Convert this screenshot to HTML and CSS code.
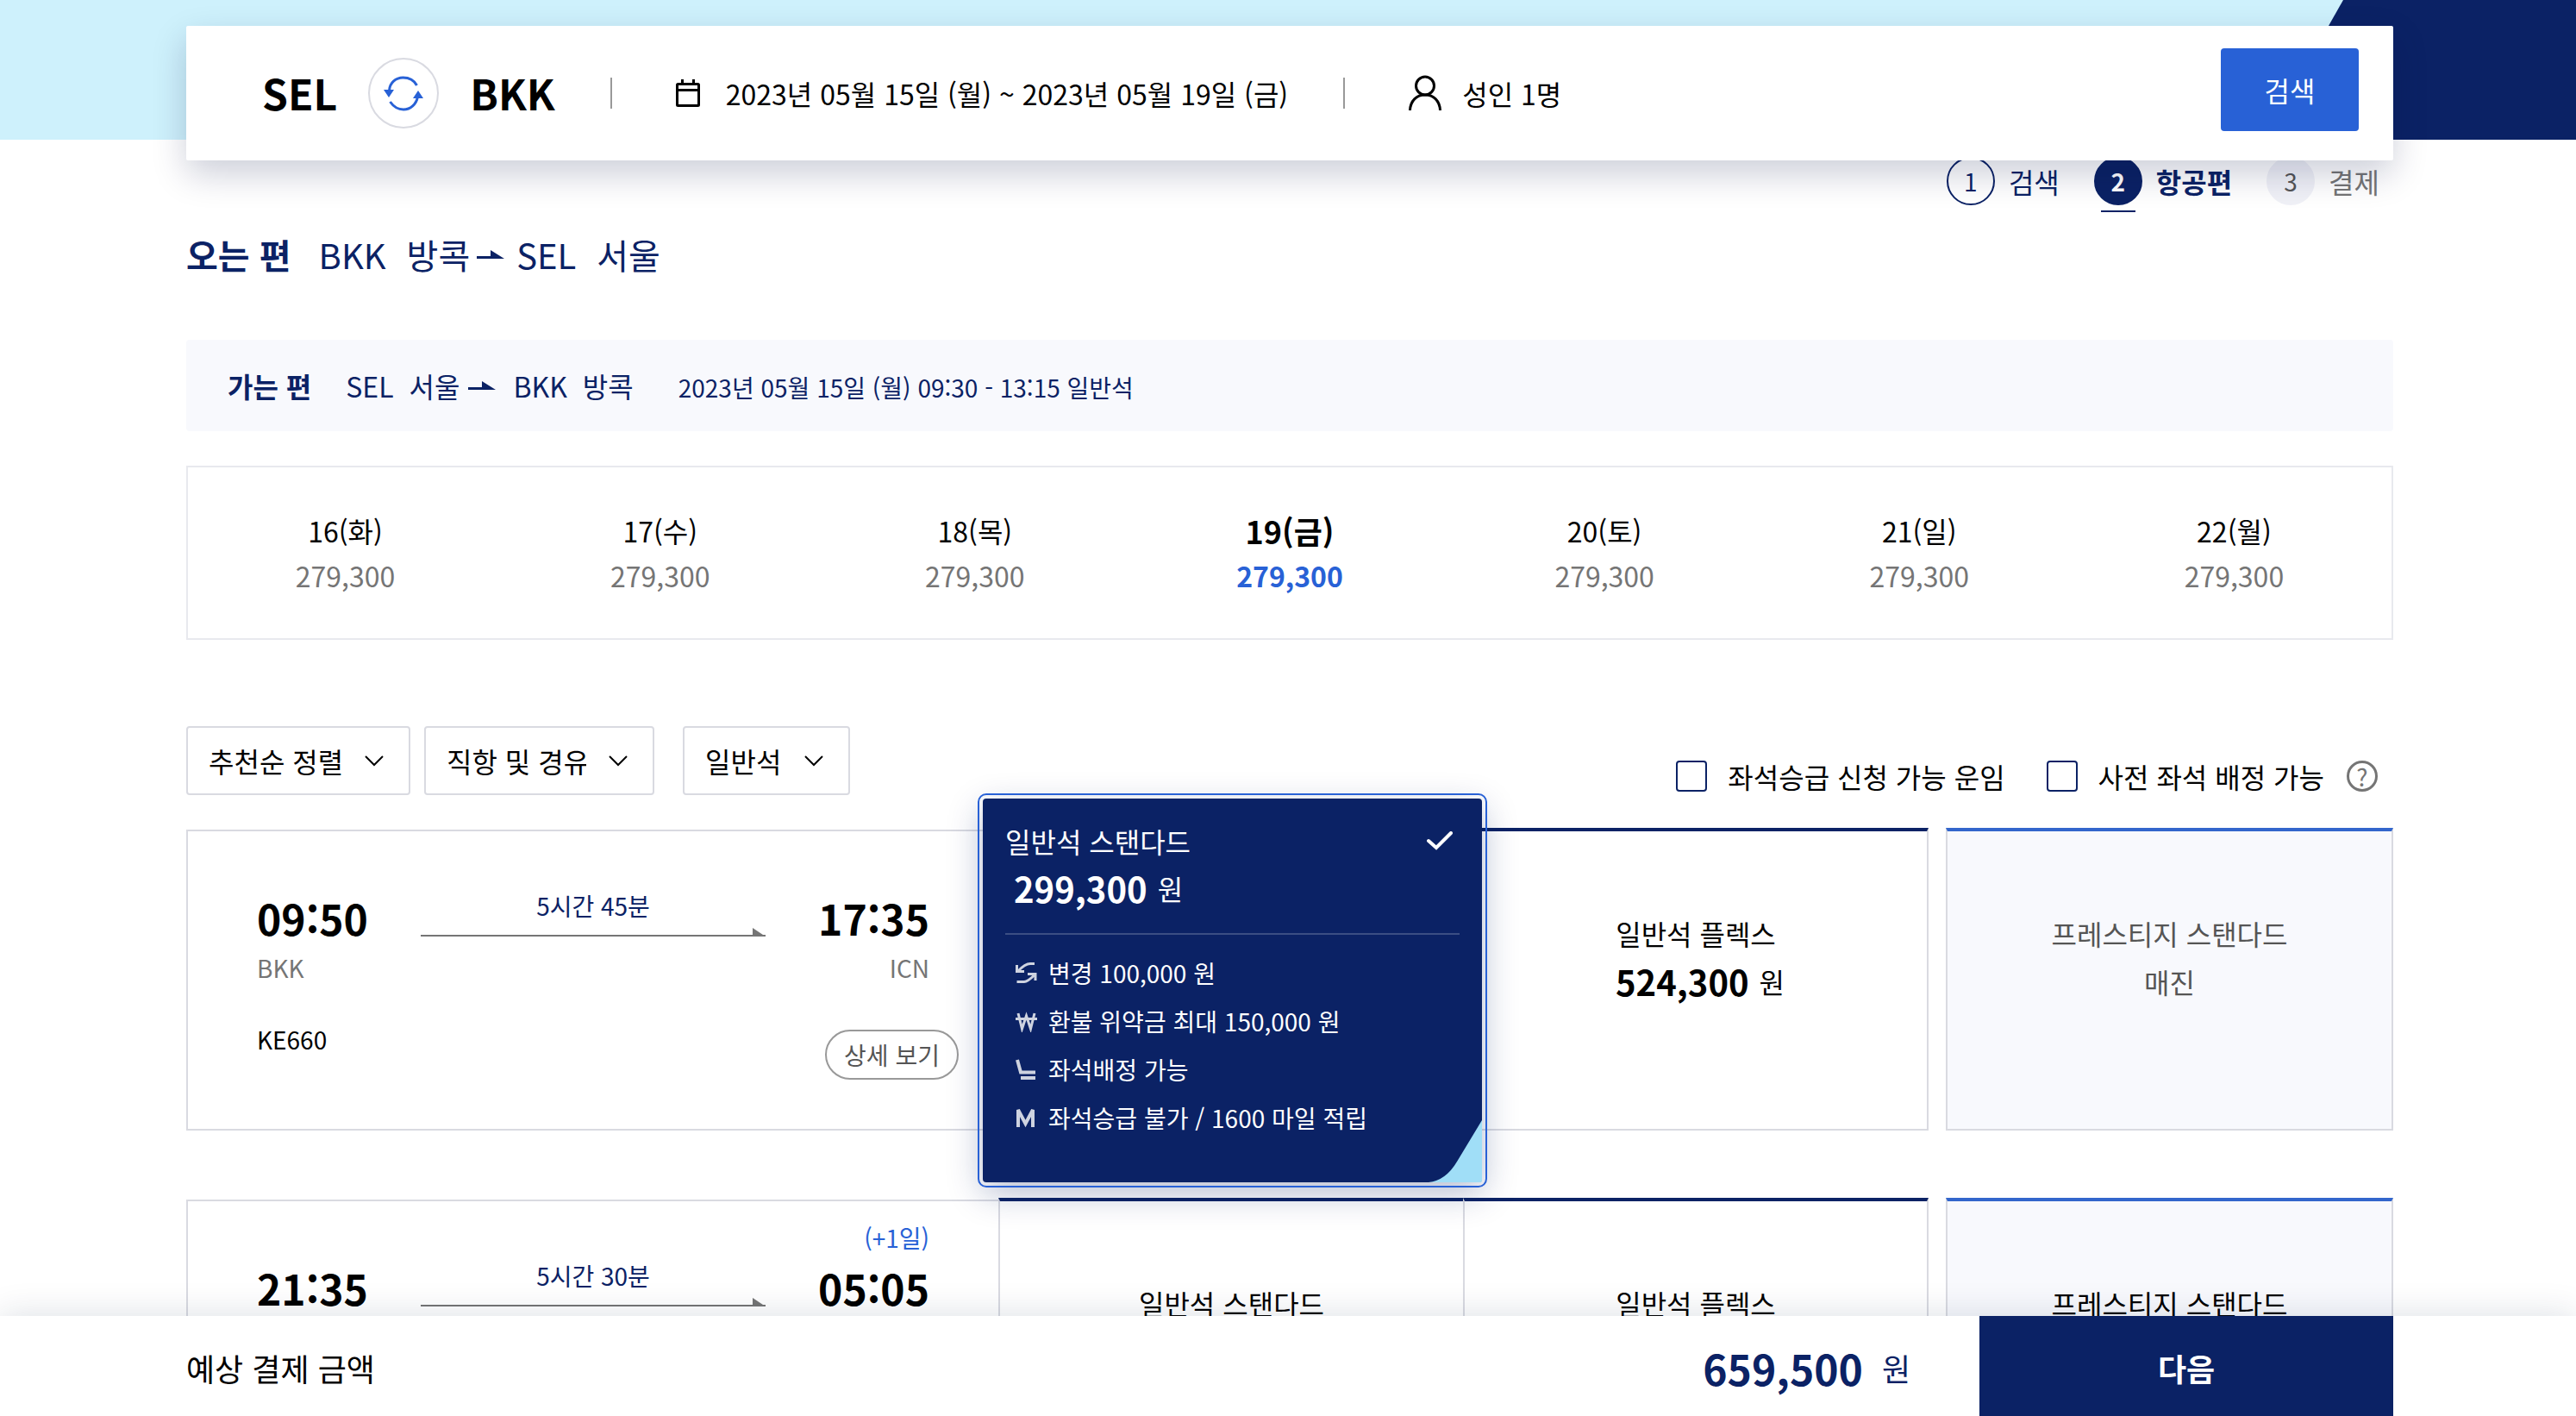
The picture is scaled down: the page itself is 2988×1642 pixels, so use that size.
FILE: index.html
```html
<!DOCTYPE html>
<html lang="ko">
<head>
  <meta charset="UTF-8">
  <title>항공편 선택</title>
  <link rel="stylesheet" href="styles.css">
</head>
<body>
  <header class="hero">
    <div class="hero-navy"></div>
  </header>

  <main class="container">
    <section class="search-bar">
      <strong class="city">SEL</strong>
      <button class="swap" type="button" aria-label="출발지 도착지 변경">
        <svg width="46" height="43" viewBox="0 0 46 43" fill="none" stroke="#2861d6" stroke-width="3">
          <path d="M6.500 18C7 9 14 3 22.500 3c7 0 13 3.500 16 9"/>
          <path d="M39.500 25C38 34 31 40 23 40c-7 0-12-4-15.500-9"/>
          <path d="M0 17h12l-6 9zM34 27h12l-6-9z" fill="#2861d6" stroke="none"/>
        </svg>
      </button>
      <strong class="city">BKK</strong>
      <span class="divider"></span>
      <span class="search-item">
        <svg width="28" height="32" viewBox="0 0 28 32" fill="none" stroke="#000" stroke-width="3">
          <rect x="1.500" y="5.500" width="25" height="25" rx="1"/>
          <path d="M1.500 12.500h25M7.500 0v6M20.500 0v6"/>
        </svg>
        2023년 05월 15일 (월) ~ 2023년 05월 19일 (금)
      </span>
      <span class="divider"></span>
      <span class="search-item person">
        <svg width="38" height="42" viewBox="0 0 38 42" fill="none" stroke="#000" stroke-width="3">
          <circle cx="19" cy="12.500" r="10.500"/>
          <path d="M1.500 41C2 30 9 23 19 23s17 7 17.500 18"/>
        </svg>
        성인 1명
      </span>
      <button class="search-btn" type="button">검색</button>
    </section>

    <ol class="steps">
      <li><span class="num">1</span>검색</li>
      <li class="current"><span class="num">2</span>항공편</li>
      <li class="todo"><span class="num">3</span>결제</li>
    </ol>

    <h1 class="title">
      <b>오는 편</b>
      <span>BKK</span>
      <span>방콕</span>
      <svg class="arrow" width="32" height="10" viewBox="0 0 32 10"><path d="M0 7h16V0l16 10H0z"/></svg>
      <span>SEL</span>
      <span>서울</span>
    </h1>

    <section class="outbound">
      <b>가는 편</b>
      <span>SEL</span>
      <span>서울</span>
      <svg class="arrow" width="32" height="10" viewBox="0 0 32 10"><path d="M0 7h16V0l16 10H0z"/></svg>
      <span>BKK</span>
      <span>방콕</span>
      <small>2023년 05월 15일 (월) 09:30 - 13:15 일반석</small>
    </section>

    <ul class="dates">
      <li><span>16(화)</span><em>279,300</em></li>
      <li><span>17(수)</span><em>279,300</em></li>
      <li><span>18(목)</span><em>279,300</em></li>
      <li class="selected"><span>19(금)</span><em>279,300</em></li>
      <li><span>20(토)</span><em>279,300</em></li>
      <li><span>21(일)</span><em>279,300</em></li>
      <li><span>22(월)</span><em>279,300</em></li>
    </ul>

    <section class="toolbar">
      <div class="dropdown">
        <select aria-label="정렬"><option>추천순 정렬</option></select>
        <svg width="22" height="13" viewBox="0 0 22 13"><path d="M1 1l10 10L21 1"/></svg>
      </div>
      <div class="dropdown">
        <select aria-label="경유"><option>직항 및 경유</option></select>
        <svg width="22" height="13" viewBox="0 0 22 13"><path d="M1 1l10 10L21 1"/></svg>
      </div>
      <div class="dropdown cabin">
        <select aria-label="좌석 등급"><option>일반석</option></select>
        <svg width="22" height="13" viewBox="0 0 22 13"><path d="M1 1l10 10L21 1"/></svg>
      </div>
      <div class="checks">
        <label><input type="checkbox">좌석승급 신청 가능 운임</label>
        <label><input type="checkbox">사전 좌석 배정 가능</label>
        <button class="help" type="button" aria-label="도움말">?</button>
      </div>
    </section>

    <article class="flight">
      <div class="info">
        <p class="plus-day"></p>
        <div class="route">
          <div><strong>09:50</strong><span>BKK</span></div>
          <div class="duration">
            <span>5시간 45분</span>
            <div class="line"><svg width="15" height="10" viewBox="0 0 15 10"><path d="M0 0v10h15z"/></svg></div>
          </div>
          <div class="arrive"><strong>17:35</strong><span>ICN</span></div>
        </div>
        <div class="flight-foot">
          <span>KE660</span>
          <button class="detail" type="button">상세 보기</button>
        </div>
      </div>
      <div class="fare">
        <div class="fare-card">
          <div class="card-title">일반석 스탠다드
            <svg width="30" height="22" viewBox="0 0 30 22" fill="none" stroke="#fff" stroke-width="4" stroke-linecap="round"><path d="M2 11l9 8L28 2"/></svg>
          </div>
          <p class="price"><b>299,300</b>원</p>
          <ul>
            <li>
              <svg width="25" height="26" viewBox="0 0 25 26"><path d="M22 2.500h-5Q11 2.500 3 11M1.500 4v7.500H10M1.500 23.500H10q4 0 12-8M14 14.500h9V22"/></svg>
              변경 100,000 원
            </li>
            <li>
              <svg width="25" height="26" viewBox="0 0 25 26"><path d="M3 4l4.500 18 5-15 5 15L22 4M0 10.500h25"/></svg>
              환불 위약금 최대 150,000 원
            </li>
            <li>
              <svg width="25" height="26" viewBox="0 0 25 26"><path d="M2 2l4 14.500h17M6 23h17" stroke-width="4"/></svg>
              좌석배정 가능
            </li>
            <li>
              <svg width="25" height="26" viewBox="0 0 25 26"><path d="M3 24V4l8.500 16L20 4v20" stroke-width="4"/></svg>
              좌석승급 불가 / 1600 마일 적립
            </li>
          </ul>
          <svg class="fold" width="62" height="72" viewBox="0 0 62 72"><path d="M62 0L33 48Q20 70 0 72h60q2 0 2-2z"/></svg>
        </div>
      </div>
      <div class="fare">
        <p>일반석 플렉스</p>
        <p class="price"><b>524,300</b>원</p>
      </div>
      <div class="fare prestige sold-out">
        <p>프레스티지 스탠다드</p>
        <p>매진</p>
      </div>
    </article>

    <article class="flight">
      <div class="info">
        <p class="plus-day">(+1일)</p>
        <div class="route">
          <div><strong>21:35</strong></div>
          <div class="duration">
            <span>5시간 30분</span>
            <div class="line"><svg width="15" height="10" viewBox="0 0 15 10"><path d="M0 0v10h15z"/></svg></div>
          </div>
          <div class="arrive"><strong>05:05</strong></div>
        </div>
      </div>
      <div class="fare"><p>일반석 스탠다드</p></div>
      <div class="fare"><p>일반석 플렉스</p></div>
      <div class="fare prestige"><p>프레스티지 스탠다드</p></div>
    </article>
  </main>

  <footer class="pay-bar">
    <span>예상 결제 금액</span>
    <p class="total"><b>659,500</b>원</p>
    <button class="next" type="button">다음</button>
  </footer>
</body>
</html>
```
FILE: styles.css
```css
* {
  box-sizing: border-box;
}
body {
  display: flex;
  flex-direction: column;
  margin: 0;
  height: 100vh;
  overflow: hidden;
  background: #fff;
  color: #000;
  font-family: 'Noto Sans CJK KR', 'Noto Sans', sans-serif;
  font-size: 32px;
  line-height: 52px;
}
button, select, input {
  font: inherit;
  margin: 0;
}
p, ul, ol {
  margin: 0;
  padding: 0;
  list-style: none;
}
svg {
  flex: none;
  display: block;
}

/* header */
.hero {
  flex: none;
  height: 162px;
  background: #cef1fc;
}
.hero-navy {
  width: 362px;
  height: 100%;
  margin-left: auto;
  background: #0b2265;
  clip-path: polygon(92px 0, 100% 0, 100% 100%, 0 100%);
}
.container {
  flex: 1;
  min-height: 0;
  overflow: hidden;
  margin-top: -162px;
  padding: 30px 212px 0 216px;
}
.search-bar {
  position: relative;
  z-index: 1;
  display: flex;
  align-items: center;
  height: 156px;
  padding: 0 40px 0 88px;
  background: #fff;
  border-radius: 2px;
  box-shadow: 0 16px 40px rgba(0, 16, 64, 0.2);
}
.city {
  padding-bottom: 2px;
  font-size: 48px;
  font-weight: 700;
}
.swap {
  display: flex;
  align-items: center;
  justify-content: center;
  width: 82px;
  height: 82px;
  margin: 0 36px;
  padding: 0;
  background: #fff;
  border: 2px solid #d9dae1;
  border-radius: 50%;
}
.divider {
  width: 2px;
  height: 36px;
  margin: 0 74px 0 64px;
  background: #999;
}
.search-item {
  display: flex;
  align-items: center;
  gap: 30px;
}
.person {
  gap: 24px;
}
.search-btn {
  width: 160px;
  height: 96px;
  margin: 0 0 8px auto;
  background: #2861d6;
  border: 0;
  border-radius: 4px;
  color: #fff;
}

/* progress steps */
.steps {
  display: flex;
  justify-content: flex-end;
  gap: 40px;
  margin-top: -4px;
  padding-right: 16px;
  color: #0b2265;
}
.steps li {
  display: flex;
  align-items: center;
  gap: 16px;
}
.num {
  display: flex;
  align-items: center;
  justify-content: center;
  width: 56px;
  height: 56px;
  border: 2px solid #0b2265;
  border-radius: 50%;
  font-size: 28px;
}
.current {
  font-weight: 700;
}
.current .num {
  position: relative;
  background: #0b2265;
  color: #fff;
}
.current .num::after {
  content: "";
  position: absolute;
  left: 6px;
  bottom: -10px;
  width: 40px;
  height: 2px;
  background: #0b2265;
}
.todo {
  color: #757575;
}
.todo .num {
  background: #f0f1f7;
  border-color: #f0f1f7;
  color: #555;
}

/* route titles */
.title {
  display: flex;
  align-items: center;
  gap: 24px;
  height: 54px;
  margin: 30px 0 72px;
  color: #0b2265;
  font-size: 40px;
  font-weight: 400;
}
.title b {
  margin-right: 8px;
}
.arrow {
  fill: #0b2265;
}
.title .arrow {
  margin: 0 -10px 0 -16px;
}
.outbound {
  display: flex;
  align-items: center;
  gap: 18px;
  height: 106px;
  padding: 0 48px;
  background: #f8f9fd;
  border-radius: 4px;
  color: #0b2265;
}
.outbound b {
  margin-right: 22px;
}
.outbound .arrow {
  margin: 0 2px 0 -8px;
}
.outbound small {
  margin-left: 34px;
  padding-top: 4px;
  font-size: 28px;
}

/* date tabs */
.dates {
  display: grid;
  grid-template-columns: repeat(7, 1fr);
  align-items: center;
  height: 202px;
  margin: 40px 0 100px;
  border: 2px solid #e8e9ee;
  text-align: center;
}
.dates span, .dates em {
  display: block;
  font-style: normal;
}
.dates em {
  color: #757575;
}
.selected span {
  font-size: 36px;
  font-weight: 700;
}
.selected em {
  color: #2861d6;
  font-weight: 700;
}

/* filters */
.toolbar {
  display: flex;
  gap: 16px;
  height: 80px;
  margin-bottom: 38px;
}
.dropdown {
  display: grid;
  align-items: center;
}
.dropdown select, .dropdown svg {
  grid-area: 1 / 1;
}
.dropdown select {
  height: 80px;
  padding: 0 77px 0 24px;
  appearance: none;
  background: #fff;
  border: 2px solid #d9dae1;
  border-radius: 4px;
  color: #000;
}
.dropdown svg {
  justify-self: end;
  margin-right: 31px;
  fill: none;
  stroke: #000;
  stroke-width: 2;
  pointer-events: none;
}
.cabin {
  margin-left: 17px;
}
.checks {
  display: flex;
  align-items: center;
  gap: 26px;
  margin: 36px 18px 0 auto;
  height: 44px;
}
.checks label {
  display: flex;
  align-items: center;
  gap: 24px;
}
.checks label:first-child {
  margin-right: 22px;
}
.checks input {
  width: 36px;
  height: 36px;
  appearance: none;
  background: #fff;
  border: 2px solid #0b2265;
  border-radius: 4px;
}
.help {
  width: 36px;
  height: 36px;
  padding: 0;
  background: none;
  border: 3px solid #757575;
  border-radius: 50%;
  color: #757575;
  font-size: 28px;
  line-height: 28px;
}

/* flight rows */
.flight {
  display: grid;
  grid-template-columns: 942fr 539fr 540fr 539fr;
  height: 351px;
  margin-bottom: 78px;
}
.info {
  margin-top: 2px;
  padding: 26px 80px 0;
  border: 2px solid #d9dae1;
  border-right: 0;
}
.plus-day {
  height: 32px;
  margin-bottom: 12px;
  color: #2861d6;
  font-size: 28px;
  line-height: 32px;
  text-align: right;
}
.route {
  display: flex;
  gap: 61px;
}
.route strong, .route span {
  display: block;
}
.route strong {
  font-size: 48px;
  font-weight: 700;
  line-height: 60px;
}
.route span {
  color: #757575;
  font-size: 28px;
  line-height: 56px;
}
.arrive {
  text-align: right;
}
.duration {
  flex: 1;
  text-align: center;
}
.route .duration span {
  margin-bottom: 10px;
  color: #0b2265;
  line-height: 32px;
}
.line {
  display: flex;
  justify-content: flex-end;
  height: 10px;
  background: linear-gradient(#757575, #757575) bottom / 100% 2px no-repeat;
}
.line svg {
  fill: #757575;
}
.flight-foot {
  display: flex;
  justify-content: space-between;
  align-items: flex-start;
  margin: 35px -34px 0 0;
  font-size: 28px;
  line-height: 40px;
}
.detail {
  width: 155px;
  height: 58px;
  margin-top: 9px;
  padding: 0;
  background: #fff;
  border: 2px solid #999;
  border-radius: 29px;
  color: #555;
}
.fare {
  position: relative;
  padding-top: 90px;
  border: 2px solid #d9dae1;
  border-top: 4px solid #0b2265;
  border-right: 0;
  line-height: 56px;
  text-align: center;
}
.fare:nth-child(3) {
  border-right: 2px solid #d9dae1;
}
.price {
  display: flex;
  align-items: center;
  justify-content: center;
  gap: 12px;
  padding-left: 10px;
}
.price b {
  font-size: 40px;
}
.prestige {
  margin-left: 20px;
  background: #f8f9fd;
  border-right: 2px solid #d9dae1;
  border-top-color: #3366cc;
}
.sold-out {
  color: #555;
}

/* selected fare */
.fare-card {
  position: absolute;
  z-index: 1;
  top: -38px;
  left: -20px;
  right: -22px;
  height: 445px;
  padding: 24px 26px;
  background: #0b2265;
  border-radius: 4px;
  outline: 2px solid #2861d6;
  outline-offset: 4px;
  box-shadow: 0 12px 40px rgba(11, 34, 101, 0.3);
  color: #fff;
}
.card-title {
  display: flex;
  align-items: center;
  justify-content: space-between;
  padding-right: 8px;
  line-height: 50px;
}
.fare-card .price {
  justify-content: flex-start;
  padding-bottom: 22px;
  border-bottom: 2px solid rgba(255, 255, 255, 0.2);
  line-height: 60px;
}
.fare-card ul {
  padding: 16px 0 0 12px;
  font-size: 28px;
}
.fare-card li {
  display: flex;
  align-items: center;
  gap: 13px;
}
.fare-card li svg {
  fill: none;
  stroke: #ced3e0;
  stroke-width: 3;
}
.fold {
  position: absolute;
  right: 0;
  bottom: 0;
  fill: #a0def7;
}

/* bottom payment bar */
.pay-bar {
  position: relative;
  z-index: 2;
  flex: none;
  display: flex;
  align-items: center;
  height: 116px;
  padding: 0 212px 0 216px;
  background: #fff;
  box-shadow: 0 0 40px rgba(0, 32, 64, 0.15);
  font-size: 36px;
}
.total {
  display: flex;
  align-items: center;
  gap: 22px;
  margin: 0 80px 0 auto;
  color: #0b2265;
}
.total b {
  font-size: 48px;
}
.pay-bar span, .total {
  padding-top: 4px;
}
.next {
  width: 480px;
  height: 116px;
  padding: 4px 0 0;
  background: #0b2265;
  border: 0;
  color: #fff;
  font-weight: 700;
}
```
